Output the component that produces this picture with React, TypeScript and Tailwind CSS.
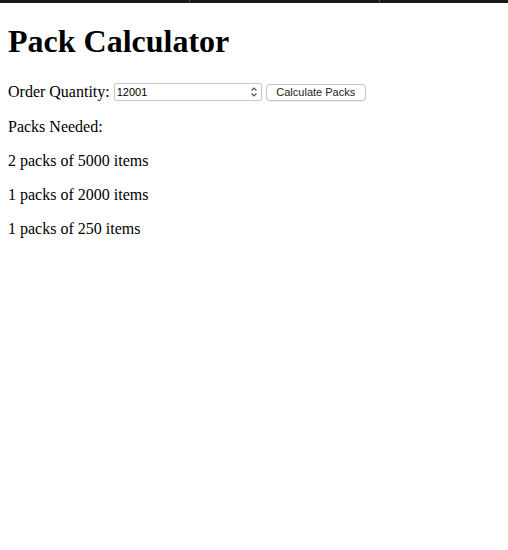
import { useState } from 'react';

const packs = [
    { count: 2, size: 5000 },
    { count: 1, size: 2000 },
    { count: 1, size: 250 },
];

function App() {
    const [qty] = useState('12001');

    return (
        <div className="min-h-screen bg-white text-black" style={{ fontFamily: '"Liberation Serif", "Times New Roman", serif' }}>
            {/* top strip */}
            <div className="flex h-[3px] gap-px bg-[#4a4a4a]">
                <div className="w-[189px] bg-[#1a1a1a]"></div>
                <div className="w-[189px] bg-[#1a1a1a]"></div>
                <div className="flex-1 bg-[#1a1a1a]"></div>
            </div>
            <div className="px-2">
                <h1 className="mt-[20px] mb-[22px] text-[32px] font-bold leading-[37px]">Pack Calculator</h1>

                <div className="mb-4 flex h-[20px] items-center text-base">
                    <label className="mr-[4px]">Order Quantity:</label>
                    <div
                        className="flex h-[18px] w-[148px] items-center justify-between rounded-[2px] border border-[#c8c8c8] bg-white pl-[2px] pr-[3px] text-[11px] text-black"
                        style={{ fontFamily: '"Liberation Sans", Arial, sans-serif' }}
                    >
                        <span>{qty}</span>
                        <svg width="8" height="12" viewBox="0 0 8 12" fill="none" stroke="#555" strokeWidth="1.2">
                            <path d="M1.5 4.5 L4 2 L6.5 4.5" />
                            <path d="M1.5 7.5 L4 10 L6.5 7.5" />
                        </svg>
                    </div>
                    <button
                        className="ml-[4px] h-[17px] w-[100px] rounded-[4px] border border-[#c4c4c4] bg-white text-[11px] leading-none text-[#222] shadow-[0_1px_0_rgba(0,0,0,0.05)]"
                        style={{ fontFamily: '"Liberation Sans", Arial, sans-serif' }}
                    >
                        Calculate Packs
                    </button>
                </div>

                <p className="mb-4 leading-[18px]">Packs Needed:</p>
                {packs.map((p) => (
                    <p key={p.size} className="mb-4 leading-[18px]">
                        {p.count} packs of {p.size} items
                    </p>
                ))}
            </div>
        </div>
    );
}

export default App;
